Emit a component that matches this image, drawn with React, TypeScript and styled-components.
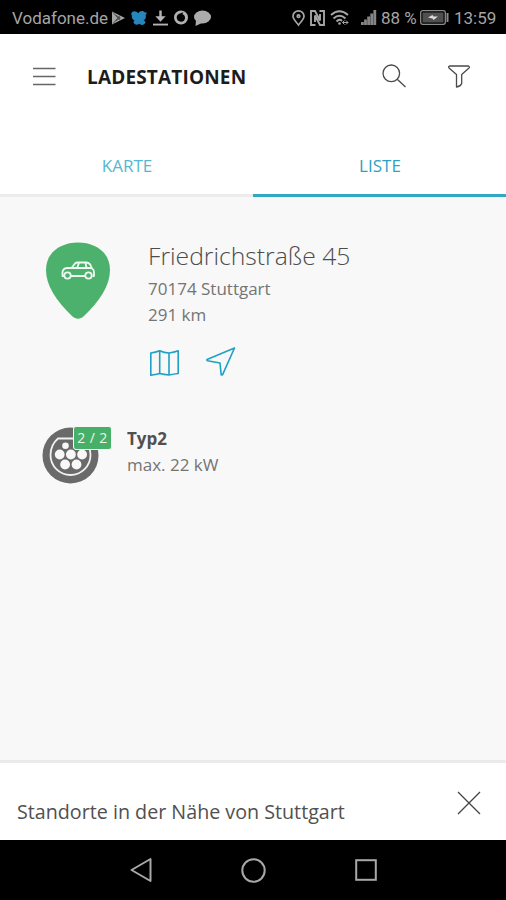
import React from "react";
import styled, { createGlobalStyle } from "styled-components";

const Global = createGlobalStyle`
  * { box-sizing: border-box; }
  body { margin: 0; background: #fff; font-family: "Open Sans", "Noto Sans", sans-serif; }
  svg { display: block; flex: none; overflow: visible; }
`;

const Screen = styled.div`
  width: 506px;
  height: 900px;
  display: flex;
  flex-direction: column;
  overflow: hidden;
`;

const StatusBar = styled.div`
  height: 34px;
  flex: none;
  display: flex;
  align-items: center;
  padding: 1px 10px 0 12px;
  background: #000;
  color: #a5a5a5;
  font-family: Roboto, sans-serif;
`;

const StatusText = styled.span<{ $size: number; $width: number; $gap?: number }>`
  font-size: ${(p) => p.$size}px;
  line-height: 20px;
  width: ${(p) => p.$width}px;
  margin-right: ${(p) => p.$gap ?? 0}px;
  white-space: nowrap;
`;

const StatusIcons = styled.div<{ $gap: number }>`
  display: flex;
  align-items: center;
  gap: ${(p) => p.$gap}px;
`;

const Spacer = styled.div`
  flex: 1;
`;

const Header = styled.header`
  height: 84px;
  flex: none;
  display: flex;
  align-items: center;
  padding: 0 36px 0 32px;
  background: #fff;
`;

const IconButton = styled.button<{ $ml?: number }>`
  margin: 0 0 0 ${(p) => p.$ml ?? 0}px;
  padding: 0;
  border: 0;
  background: none;
`;

const Title = styled.h1`
  margin: 2px 0 0 31px;
  flex: 1;
  font-size: 19px;
  line-height: 26px;
  font-weight: 700;
  letter-spacing: 0.17px;
  color: #1c1c1c;
`;

const Tabs = styled.nav`
  height: 79px;
  flex: none;
  display: grid;
  grid-template-columns: 1fr 1fr;
`;

const Tab = styled.div<{ $active?: boolean }>`
  display: flex;
  justify-content: center;
  padding: 36px 0 0 1px;
  font-size: 17px;
  line-height: 24px;
  color: ${(p) => (p.$active ? "#2ba3c4" : "#55b7d2")};
  border-bottom: 3px solid ${(p) => (p.$active ? "#30a8c4" : "#ececec")};
`;

const Content = styled.main`
  flex: 1;
  background: #f8f8f8;
  padding: 43px 42px 0;
`;

const Station = styled.section`
  display: flex;
  gap: 38px;
  padding-left: 4px;
`;

const PinWrap = styled.div`
  margin-top: 2px;
`;

const Address = styled.div`
  display: flex;
  flex-direction: column;
`;

const Street = styled.h2`
  margin: 0 0 4px;
  font-size: 24.7px;
  line-height: 32px;
  font-weight: 300;
  color: #4c4c4c;
`;

const Line = styled.p<{ $bold?: boolean }>`
  margin: 0;
  font-size: 17px;
  line-height: 26px;
  font-weight: ${(p) => (p.$bold ? 700 : 400)};
  color: ${(p) => (p.$bold ? "#505050" : "#747474")};
`;

const Actions = styled.div`
  display: flex;
  align-items: flex-end;
  gap: 27px;
  margin: 19px 0 0 2px;
`;

const Connector = styled.section`
  display: flex;
  gap: 28px;
  margin-top: 50px;
`;

const PlugWrap = styled.div`
  position: relative;
  width: 57px;
  height: 57px;
  margin-top: 1px;
`;

const Badge = styled.span`
  position: absolute;
  left: 31px;
  top: -1px;
  width: 39px;
  height: 24px;
  border: 1px solid #f8f8f8;
  border-radius: 3px;
  background: #46b069;
  color: #e9f6ed;
  font-size: 14px;
  line-height: 22px;
  letter-spacing: 0.4px;
  text-align: center;
  white-space: nowrap;
`;

const Footer = styled.footer`
  height: 80px;
  flex: none;
  display: flex;
  justify-content: space-between;
  align-items: flex-start;
  padding: 0 25px 0 17px;
  border-top: 3px solid #ebebeb;
  background: #fff;
`;

const FooterText = styled.span`
  margin-top: 35px;
  font-size: 19.7px;
  line-height: 28px;
  color: #505050;
`;

const CloseButton = styled(IconButton)`
  margin-top: 28px;
`;

const NavBar = styled.div`
  height: 60px;
  flex: none;
  display: flex;
  align-items: center;
  padding-left: 130px;
  background: #000;
`;

const NavGap = styled.div<{ $w: number }>`
  width: ${(p) => p.$w}px;
`;

const PlayIcon = () => (
  <svg width="13" height="14" viewBox="0 0 14 14" fill="#a5a5a5">
    <path d="M0 0 14 7 0 14Z" />
    <path d="M4 4 9 7 4 10M1 1 9 10M1 13 9 4" fill="none" stroke="#333" strokeWidth="0.8" />
  </svg>
);

const BirdIcon = () => (
  <svg width="16" height="16" viewBox="0 0 17 16" fill="#2585bd">
    <path d="M1 2C3 0 6 1 8 3 9 0 13 0 14.500 2L17 2.500 15.500 5C16.500 8 15 9.500 13.500 10L15.500 12.500C14 16 11 16 9 14 6 16 3 15 2.500 12L4 11C2 10 0.500 8 1 5.500 0 4 0 3 1 2Z" />
  </svg>
);

const DownloadIcon = () => (
  <svg width="15" height="16" viewBox="0 0 16 16" fill="none" stroke="#b5b5b5" strokeWidth="2">
    <path d="M8 0V9" strokeWidth="2.600" />
    <path d="M2.500 6H13.500L8 12Z" fill="#b5b5b5" stroke="none" />
    <path d="M0 15H16" />
  </svg>
);

const RingIcon = () => (
  <svg width="14" height="15" viewBox="0 0 15 15">
    <path fillRule="evenodd" fill="#b0b0b0" d="M7.500 0A7.500 7.500 0 1 1 7.500 15 7.500 7.500 0 0 1 7.500 0ZM7 3C1 4 2 12 7.500 12 13 12 13 5 9 4L10 2Z" />
  </svg>
);

const ChatIcon = () => (
  <svg width="17" height="16" viewBox="0 0 17 16" fill="#ababab">
    <ellipse cx="8.500" cy="7" rx="8.500" ry="6.500" />
    <path d="M2 10 1.500 16 8 13Z" />
  </svg>
);

const LocationIcon = () => (
  <svg width="13" height="16" viewBox="0 0 13 16" fill="none" stroke="#a5a5a5" strokeWidth="1.700">
    <path d="M6.500 15C4 11.500 1 9 1 6.200A5.500 5.300 0 0 1 12 6.200C12 9 9 11.500 6.500 15Z" />
    <circle cx="6.500" cy="6.200" r="1.300" />
  </svg>
);

const NfcIcon = () => (
  <svg width="15" height="16" viewBox="0 0 15 16" fill="none" stroke="#a5a5a5" strokeWidth="1.900">
    <path d="M5.500 15H1V1H5L10 10.500V4M9.500 1H14V15H10L5 5.500V12" />
  </svg>
);

const WifiIcon = () => (
  <svg width="20" height="16" viewBox="0 0 20 16" fill="none" stroke="#a5a5a5" strokeWidth="1.900">
    <path d="M1 5Q9.500-2.500 18 5M3.500 8.500Q9.500 3 15.500 8.500M6.500 11.500Q9.500 8.500 12 11" />
    <circle cx="9.500" cy="13.500" r="1.300" fill="#a5a5a5" stroke="none" />
    <path d="M12.500 12.500H18M14.500 10.500 12.500 12.500 14.500 14.500M16 10.500 18 12.500 16 14.500" strokeWidth="1" />
  </svg>
);

const SignalIcon = () => (
  <svg width="16" height="15" viewBox="0 0 16 15" fill="#858585">
    <path d="M0 12H2.800V15H0ZM3.100 9.500H5.900V15H3.100ZM6.200 6.500H9V15H6.200ZM9.300 3.500H12.100V15H9.300ZM12.400 0H15.200V15H12.400Z" />
  </svg>
);

const BatteryIcon = () => (
  <svg width="29" height="15" viewBox="0 0 29 15">
    <rect x="0.700" y="0.700" width="24.600" height="13.600" rx="2" fill="none" stroke="#8b8b8b" strokeWidth="1.300" />
    <rect x="2.500" y="2.500" width="21" height="10" fill="#505050" />
    <path d="M8 7.500 12.500 5 13.500 6.500H18L13.500 10 12.500 8.500Z" fill="#ddd" />
    <path d="M27.500 3V12" stroke="#8b8b8b" strokeWidth="2" />
  </svg>
);

const MenuIcon = () => (
  <svg width="24" height="20" viewBox="0 0 24 20" fill="none" stroke="#666" strokeWidth="1.500">
    <path d="M1 2.500H23.500M1 10.500H23.500M1 18.500H23.500" />
  </svg>
);

const SearchIcon = () => (
  <svg width="24" height="24" viewBox="0 0 24 24" fill="none" stroke="#4a4a4a" strokeWidth="1.300">
    <circle cx="9.300" cy="9.300" r="8.300" />
    <path d="M15.200 15.200 23.500 23" />
  </svg>
);

const FilterIcon = () => (
  <svg width="22" height="23" viewBox="0 0 22 23" fill="none" stroke="#4a4a4a" strokeWidth="1.300" strokeLinejoin="round">
    <path d="M1.500 1H20.500Q22 2 21 3L13.700 9.500V18.500Q12.500 21.500 8.500 22V9.500L1 3Q0 1.500 1.500 1Z" />
  </svg>
);

const PinIcon = () => (
  <svg width="64" height="78" viewBox="0 0 64 78">
    <path d="M32 0.500C49 0.500 64 10 64 28 64 43 54 59 38 74 34 77.500 30 77.500 26 74 10 59 0 43 0 28 0 10 15 0.500 32 0.500Z" fill="#4bb16c" />
    <g fill="none" stroke="#eef9f1" strokeWidth="1.800" strokeLinejoin="round">
      <path d="M18 34H16.500V30Q17 26.500 21 26H25.500L29 21.500Q30 20.500 32 20.500H40Q43 20.500 44.500 23L46 26.500Q48 27.500 48 30V34H46.500" />
      <path d="M25.500 26H46M31 26 33 21M39.500 21 40.500 26M25 34H39" />
      <circle cx="21.500" cy="33.500" r="3.200" />
      <circle cx="42.500" cy="33.500" r="3.200" />
    </g>
  </svg>
);

const MapIcon = () => (
  <svg width="29" height="26" viewBox="0 0 29 26" fill="none" stroke="#1fa0c6" strokeWidth="1.600" strokeLinejoin="round">
    <path d="M0.800 3Q5.500 2.500 9.700 0.800 14 3 19 3 24 2.500 28.200 0.800V23.500Q24 24 19 25 14 24.500 9.700 23.500 5.500 24.500 0.800 25.300Z" />
    <path d="M9.700 1V23.500M19 3V25" />
  </svg>
);

const NavigateIcon = () => (
  <svg width="30" height="29" viewBox="0 0 30 29" fill="none" stroke="#1fa0c6" strokeWidth="1.600" strokeLinejoin="round">
    <path d="M28.500 1 1 12.500Q0.500 13.500 1.500 13.800L14 16 15.200 28 16.500 27.800Z" />
  </svg>
);

const PlugIcon = () => (
  <svg width="57" height="57" viewBox="0 0 57 57">
    <circle cx="28.500" cy="28.500" r="28" fill="#6a6a6a" />
    <path d="M16 11.500H41Q48.500 19 48.500 28A20 20 0 0 1 8.500 28Q8.500 18 16 11.500Z" fill="#6a6a6a" stroke="#f1f1f1" strokeWidth="1.800" />
    <g fill="#f8f8f8">
      <circle cx="23.500" cy="18.800" r="3.300" />
      <circle cx="34.500" cy="18.800" r="3.300" />
      <circle cx="17.700" cy="27.500" r="4.900" />
      <circle cx="28.900" cy="27.500" r="4.900" />
      <circle cx="40.100" cy="27.500" r="4.900" />
      <circle cx="23.100" cy="37.500" r="4.900" />
      <circle cx="34.500" cy="37.500" r="4.900" />
    </g>
  </svg>
);

const CloseIcon = () => (
  <svg width="24" height="24" viewBox="0 0 24 24" stroke="#444" strokeWidth="1.300">
    <path d="M1 1 23 23M23 1 1 23" />
  </svg>
);

const BackIcon = () => (
  <svg width="22" height="24" viewBox="0 0 22 24" fill="none" stroke="#a8a8a8" strokeWidth="2" strokeLinejoin="round">
    <path d="M20.500 1V23L1.500 12Z" />
  </svg>
);

const HomeIcon = () => (
  <svg width="25" height="25" viewBox="0 0 25 25" fill="none" stroke="#a8a8a8" strokeWidth="2">
    <circle cx="12.500" cy="12.500" r="11.200" />
  </svg>
);

const RecentIcon = () => (
  <svg width="22" height="22" viewBox="0 0 22 22" fill="none" stroke="#a8a8a8" strokeWidth="2">
    <rect x="1.200" y="1.200" width="19.600" height="19.600" />
  </svg>
);

export default function App() {
  return (
    <Screen>
      <Global />
      <StatusBar>
        <StatusText $size={17} $width={96} $gap={4}>Vodafone.de</StatusText>
        <StatusIcons $gap={6}>
          <PlayIcon />
          <BirdIcon />
          <DownloadIcon />
          <RingIcon />
          <ChatIcon />
        </StatusIcons>
        <Spacer />
        <StatusIcons $gap={5}>
          <LocationIcon />
          <NfcIcon />
          <WifiIcon />
        </StatusIcons>
        <NavGap $w={11} />
        <SignalIcon />
        <NavGap $w={4} />
        <StatusText $size={17} $width={35} $gap={4}>88 %</StatusText>
        <BatteryIcon />
        <NavGap $w={5} />
        <StatusText $size={17} $width={42}>13:59</StatusText>
      </StatusBar>
      <Header>
        <IconButton aria-label="Menü"><MenuIcon /></IconButton>
        <Title>LADESTATIONEN</Title>
        <IconButton aria-label="Suche"><SearchIcon /></IconButton>
        <IconButton aria-label="Filter" $ml={42}><FilterIcon /></IconButton>
      </Header>
      <Tabs>
        <Tab>KARTE</Tab>
        <Tab $active>LISTE</Tab>
      </Tabs>
      <Content>
        <Station>
          <PinWrap><PinIcon /></PinWrap>
          <Address>
            <Street>Friedrichstraße 45</Street>
            <Line>70174 Stuttgart</Line>
            <Line>291 km</Line>
            <Actions>
              <MapIcon />
              <NavigateIcon />
            </Actions>
          </Address>
        </Station>
        <Connector>
          <PlugWrap>
            <PlugIcon />
            <Badge>2 / 2</Badge>
          </PlugWrap>
          <Address>
            <Line $bold>Typ2</Line>
            <Line>max. 22 kW</Line>
          </Address>
        </Connector>
      </Content>
      <Footer>
        <FooterText>Standorte in der Nähe von Stuttgart</FooterText>
        <CloseButton aria-label="Schließen"><CloseIcon /></CloseButton>
      </Footer>
      <NavBar>
        <BackIcon />
        <NavGap $w={89} />
        <HomeIcon />
        <NavGap $w={89} />
        <RecentIcon />
      </NavBar>
    </Screen>
  );
}
